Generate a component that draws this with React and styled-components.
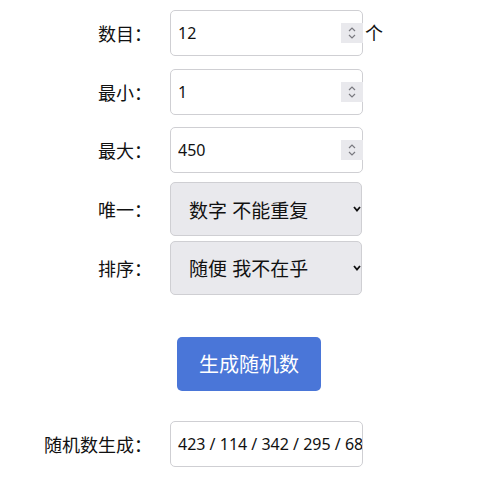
import React, { useState } from 'react';
import styled, { createGlobalStyle } from 'styled-components';

const GlobalStyle = createGlobalStyle`
	body {
		margin: 0;
		background: #fff;
		font-family: "Noto Sans CJK SC", "Noto Sans", sans-serif;
		color: #111;
	}
`;

const Page = styled.div`
	padding-top: 4px;
	display: flex;
	flex-direction: column;
`;

const Row = styled.div`
	display: grid;
	grid-template-columns: 152px auto;
	column-gap: 18px;
	align-items: center;
	height: 58.6px;
`;

const Label = styled.label`
	text-align: right;
	font-size: 18px;
	line-height: 1;
`;

const Field = styled.div`
	display: flex;
	align-items: center;
`;

const InputBox = styled.div`
	position: relative;
	width: 193px;
	height: 46px;
`;

const NumberInput = styled.input`
	box-sizing: border-box;
	width: 100%;
	height: 100%;
	border: 1px solid #cfcfd3;
	border-radius: 5px;
	padding: 0 24px 0 7px;
	font-family: "Noto Sans", "Noto Sans CJK SC", sans-serif;
	font-size: 16px;
	color: #111;
	background: #fff;
	outline: none;
	-moz-appearance: textfield;

	&::-webkit-outer-spin-button,
	&::-webkit-inner-spin-button {
		-webkit-appearance: none;
		margin: 0;
	}
`;

const Spinner = styled.div`
	position: absolute;
	right: 0;
	top: 13px;
	width: 22px;
	height: 20px;
	background: #e9e9ed;
	display: flex;
	align-items: center;
	justify-content: center;
`;

const Unit = styled.span`
	font-size: 18px;
	margin-left: 2px;
	margin-top: -2px;
`;

const SelectBox = styled.div`
	position: relative;
	width: 192px;
	height: 54px;
`;

const Select = styled.select`
	box-sizing: border-box;
	width: 100%;
	height: 100%;
	appearance: none;
	-webkit-appearance: none;
	border: 1px solid #cfcfd3;
	border-radius: 5px;
	background: #e9e9ed;
	padding: 0 20px 0 18px;
	font-family: "Noto Sans CJK SC", "Noto Sans", sans-serif;
	font-size: 19px;
	word-spacing: 1px;
	color: #111;
	outline: none;
`;

const Caret = styled.span`
	position: absolute;
	right: 1px;
	top: 50%;
	transform: translateY(-50%);
	display: flex;
	pointer-events: none;
`;

const ButtonRow = styled.div`
	padding: 40px 0 24px 177px;
`;

const Button = styled.button`
	width: 144px;
	height: 54px;
	border: none;
	border-radius: 5px;
	background: #4a76d8;
	color: #fff;
	font-family: "Noto Sans CJK SC", "Noto Sans", sans-serif;
	font-size: 20px;
	cursor: pointer;
`;

const Output = styled.div`
	box-sizing: border-box;
	width: 193px;
	height: 46px;
	border: 1px solid #cfcfd3;
	border-radius: 5px;
	padding: 0 7px;
	display: flex;
	align-items: center;
	overflow: hidden;
	white-space: nowrap;
	font-family: "Noto Sans", "Noto Sans CJK SC", sans-serif;
	font-size: 16px;
`;

const SpinIcon = () => (
	<svg width="10" height="16" viewBox="0 0 10 16">
		<polyline points="2,6 5,3 8,6" fill="none" stroke="#7a7a80" strokeWidth="1.2" />
		<polyline points="2,10 5,13 8,10" fill="none" stroke="#7a7a80" strokeWidth="1.2" />
	</svg>
);

const CaretIcon = () => (
	<svg width="8" height="6" viewBox="0 0 8 6">
		<polyline points="1,1 4,4.5 7,1" fill="none" stroke="#111" strokeWidth="1.8" />
	</svg>
);

function NumberField({ value, onChange }) {
	return (
		<InputBox>
			<NumberInput type="number" value={value} onChange={e => onChange(e.target.value)} />
			<Spinner><SpinIcon /></Spinner>
		</InputBox>
	);
}

function SelectField({ options }) {
	return (
		<SelectBox>
			<Select>
				{options.map(o => <option key={o}>{o}</option>)}
			</Select>
			<Caret><CaretIcon /></Caret>
		</SelectBox>
	);
}

export default function App() {
	const [count, setCount] = useState('12');
	const [min, setMin] = useState('1');
	const [max, setMax] = useState('450');

	return (
		<Page>
			<GlobalStyle />
			<Row>
				<Label>数目：</Label>
				<Field>
					<NumberField value={count} onChange={setCount} />
					<Unit>个</Unit>
				</Field>
			</Row>
			<Row>
				<Label>最小：</Label>
				<Field><NumberField value={min} onChange={setMin} /></Field>
			</Row>
			<Row>
				<Label>最大：</Label>
				<Field><NumberField value={max} onChange={setMax} /></Field>
			</Row>
			<Row>
				<Label>唯一：</Label>
				<Field><SelectField options={['数字 不能重复', '数字 可以重复']} /></Field>
			</Row>
			<Row>
				<Label>排序：</Label>
				<Field><SelectField options={['随便 我不在乎', '从小到大', '从大到小']} /></Field>
			</Row>
			<ButtonRow>
				<Button>生成随机数</Button>
			</ButtonRow>
			<Row>
				<Label>随机数生成：</Label>
				<Output>423 / 114 / 342 / 295 / 68</Output>
			</Row>
		</Page>
	);
}
